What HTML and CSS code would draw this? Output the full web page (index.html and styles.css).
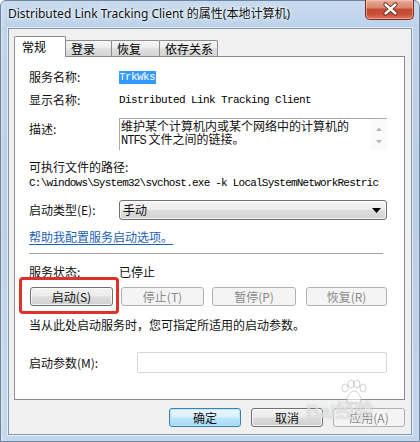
FILE: index.html
```html
<!DOCTYPE html>
<html>
<head>
<meta charset="utf-8">
<link rel="stylesheet" href="styles.css">
</head>
<body>
<div class="window">
  <div class="titlebar">
    <span class="title">Distributed Link Tracking Client 的属性(本地计算机)</span>
    <div class="close">
      <svg width="49" height="19" viewBox="0 0 49 19">
        <path d="M19.5 4.5 L29.5 13.5 M29.5 4.5 L19.5 13.5" stroke="#5a2418" stroke-width="4.2" stroke-linecap="round" fill="none"/>
        <path d="M19.5 4.5 L29.5 13.5 M29.5 4.5 L19.5 13.5" stroke="#ffffff" stroke-width="2.4" stroke-linecap="round" fill="none"/>
      </svg>
    </div>
  </div>
  <div class="client">
    <div class="tabs">
      <div class="tab active">常规</div>
      <div class="tab t2">登录</div>
      <div class="tab t3">恢复</div>
      <div class="tab t4">依存关系</div>
    </div>
    <div class="panel">
      <div class="row r1"><span class="label">服务名称:</span><span class="mono sel">TrkWks</span></div>
      <div class="row r2"><span class="label">显示名称:</span><span class="mono">Distributed Link Tracking Client</span></div>
      <div class="row r3">
        <span class="label desc-label">描述:</span>
        <div class="desc">
          <div class="desc-text"><div>维护某个计算机内或某个网络中的计算机的</div><div><span class="mono-inline">NTFS</span> 文件之间的链接。</div></div>
          <div class="scroll">
            <svg width="16" height="32" viewBox="0 0 16 32">
              <path d="M5 12 L8 8.5 L11 12 Z" fill="#b8b8b8"/>
              <path d="M5 21 L8 24.5 L11 21 Z" fill="#b8b8b8"/>
            </svg>
          </div>
        </div>
      </div>
      <div class="row r4"><span class="text">可执行文件的路径:</span></div>
      <div class="row r5"><span class="mono path">C:\windows\System32\svchost.exe -k LocalSystemNetworkRestric</span></div>
      <div class="row r6">
        <span class="label">启动类型(E):</span>
        <div class="combo">
          <span class="combo-text">手动</span>
          <svg class="combo-arrow" width="9" height="5" viewBox="0 0 9 5"><path d="M0 0 H9 L4.5 5 Z" fill="#000"/></svg>
        </div>
      </div>
      <div class="row r7"><a class="link">帮助我配置服务启动选项。</a></div>
      <div class="sep"></div>
      <div class="row r8"><span class="label">服务状态:</span><span class="text">已停止</span></div>
      <div class="btnrow">
        <div class="btn">启动(S)</div>
        <div class="btn disabled">停止(T)</div>
        <div class="btn disabled">暂停(P)</div>
        <div class="btn disabled">恢复(R)</div>
        <div class="highlight"></div>
      </div>
      <div class="row r10"><span class="text">当从此处启动服务时，您可指定所适用的启动参数。</span></div>
      <div class="row r11">
        <span class="label param-label">启动参数(M):</span>
        <div class="input"></div>
      </div>
    </div>
    <div class="dlg-buttons">
      <div class="btn dlg default">确定</div>
      <div class="btn dlg">取消</div>
      <div class="btn dlg disabled">应用(A)</div>
    </div>
    <div class="watermark">
      <svg class="wm-paw" width="30" height="26" viewBox="0 0 30 26">
        <g fill="rgba(255,255,255,0.6)" stroke="rgba(150,150,150,0.45)" stroke-width="1">
          <ellipse cx="7" cy="9" rx="3" ry="4"/>
          <ellipse cx="13" cy="5" rx="3" ry="4"/>
          <ellipse cx="19" cy="5" rx="3" ry="4"/>
          <ellipse cx="25" cy="9" rx="3" ry="4"/>
          <path d="M9 22 C9 15 14 12 16 12 C18 12 23 15 23 22 C23 25 9 25 9 22 Z"/>
        </g>
      </svg>
      <span class="wm-text">Bai经验</span>
    </div>
  </div>
</div>
</body>
</html>
```

FILE: styles.css
```css
* { box-sizing: border-box; }
html, body { margin: 0; padding: 0; }
body {
  width: 420px;
  height: 442px;
  overflow: hidden;
  font-family: "Noto Sans", "Noto Sans CJK SC", sans-serif;
  font-size: 12px;
  color: #000;
}
.window {
  width: 420px;
  height: 442px;
  background:
    linear-gradient(90deg, rgba(255,255,255,0.35) 0px, rgba(255,255,255,0) 4px, rgba(255,255,255,0) 416px, rgba(255,255,255,0.3) 420px),
    linear-gradient(180deg, #c7dbef 0px, #bcd2ea 28px, #b7cee7 200px, #c3d7ec 442px);
  display: flex;
  flex-direction: column;
  border: 1px solid #6f839b;
  border-radius: 6px 6px 0 0;
}
.titlebar {
  height: 27px;
  display: flex;
  align-items: flex-start;
  padding-left: 7px;
}
.title {
  font-family: "Noto Sans", "Noto Sans CJK SC", sans-serif;
  font-size: 12px;
  line-height: 16px;
  margin-top: 5px;
  color: #111;
  text-shadow: 0 0 6px rgba(255,255,255,0.9), 0 0 3px rgba(255,255,255,0.9);
  white-space: nowrap;
}
.close {
  margin-left: auto;
  margin-right: 5px;
  margin-top: -1px;
  width: 49px;
  height: 20px;
  border: 1px solid #7a2f22;
  border-top: none;
  border-radius: 0 0 5px 5px;
  background: linear-gradient(180deg, #e9aa98 0%, #d98670 40%, #c44a33 50%, #c94f37 75%, #e07a5e 100%);
  box-shadow: inset 0 0 0 1px rgba(255,220,210,0.45);
}
.close svg { display: block; }
.client {
  margin: 0 7px 0 7px;
  height: 407px;
  background: #f0f0f0;
  border: 1px solid #8496ab;
  box-shadow: 0 0 0 1px rgba(255,255,255,0.6);
  padding: 7px 6px 0 5px;
  position: relative;
}
.tabs {
  height: 20px;
  display: flex;
  align-items: flex-end;
  position: relative;
  z-index: 1;
}
.tab {
  height: 16px;
  border: 1px solid #898c95;
  border-bottom: none;
  border-radius: 2px 2px 0 0;
  background: linear-gradient(180deg, #f6f6f6 0%, #ececec 45%, #dedede 55%, #d4d4d4 100%);
  font-family: "Noto Sans CJK SC", sans-serif;
  font-size: 12px;
  line-height: 15px;
  padding: 0 0 0 5px;
  margin-left: -1px;
  white-space: nowrap;
}
.tab.active {
  height: 21px;
  margin-bottom: -1px;
  margin-left: 0;
  width: 52px;
  background: #fff;
  padding: 2px 0 0 7px;
  position: relative;
  z-index: 2;
}
.t2 { width: 47px; }
.t3 { width: 49px; }
.t4 { width: 59px; }
.panel {
  height: 344px;
  background: #fff;
  border: 1px solid #898c95;
  padding: 12px 17px 0 14px;
  display: flex;
  flex-direction: column;
}
.row {
  display: flex;
  align-items: center;
  height: 16px;
  flex: none;
}
.label {
  width: 90px;
  flex: none;
  font-family: "Noto Sans CJK SC", sans-serif;
  font-size: 12px;
  line-height: 16px;
  color: #111;
}
.text {
  font-family: "Noto Sans CJK SC", sans-serif;
  font-size: 12px;
  line-height: 16px;
  color: #111;
  white-space: nowrap;
}
.mono {
  font-family: "Liberation Mono", "Noto Sans CJK SC", monospace;
  font-size: 11px;
  letter-spacing: -0.6px;
  line-height: 13px;
  white-space: nowrap;
}
.sel {
  background: #3399ff;
  color: #fff;
  padding: 0 1px 0 0;
  width: 37px;
  display: inline-block;
}
.r2 { margin-top: 7px; }
.r3 {
  margin-top: 10px;
  height: 32px;
  align-items: flex-start;
}
.desc-label { padding-top: 3px; }
.desc {
  flex: 1;
  height: 32px;
  display: flex;
  border-top: 1px solid #a9a9a9;
  border-left: 1px solid #a9a9a9;
}
.desc-text {
  flex: 1;
  padding: 0 0 0 1px;
  font-family: "Noto Sans CJK SC", sans-serif;
  font-size: 12px;
  line-height: 13px;
  color: #111;
  white-space: nowrap;
  min-width: 0;
}
.mono-inline {
  font-family: "Liberation Mono", monospace;
  font-size: 12px;
  letter-spacing: -1px;
}
.scroll {
  width: 16px;
  flex: none;
  background: #fafafa;
}
.scroll svg { display: block; }
.r4 { margin-top: 9px; }
.path { letter-spacing: -0.78px; }
.r6 { margin-top: 9px; height: 20px; }
.combo {
  flex: 1;
  height: 20px;
  border: 1px solid #707070;
  border-radius: 3px;
  background: linear-gradient(180deg, #f4f4f4 0%, #ececec 48%, #dddddd 52%, #d2d2d2 100%);
  box-shadow: inset 0 0 0 1px rgba(255,255,255,0.7);
  display: flex;
  align-items: center;
  padding: 0 4px 0 3px;
}
.combo-text {
  font-family: "Noto Sans CJK SC", sans-serif;
  font-size: 12px;
  line-height: 16px;
  color: #111;
}
.combo-arrow { margin-left: auto; margin-right: 1px; }
.r7 { margin-top: 9px; }
.link {
  font-family: "Noto Sans CJK SC", sans-serif;
  font-size: 12px;
  line-height: 16px;
  color: #1c62b5;
  text-decoration: underline;
  text-underline-offset: 2px;
}
.sep {
  margin-top: 8px;
  height: 1px;
  background: #a0a0a0;
  margin-right: 4px;
  flex: none;
}
.r8 { margin-top: 10px; }
.btnrow {
  margin-top: 7px;
  margin-left: 1px;
  height: 19px;
  display: grid;
  grid-template-columns: 83px 83px 84px 83px;
  column-gap: 8px;
  position: relative;
  flex: none;
}
.btnrow .btn:nth-child(4) { margin-left: 2px; }
.btn {
  height: 19px;
  border: 1px solid #707070;
  border-radius: 3px;
  background: linear-gradient(180deg, #f2f2f2 0%, #ebebeb 48%, #dddddd 52%, #cfcfcf 100%);
  box-shadow: inset 0 0 0 1px rgba(255,255,255,0.75);
  font-family: "Noto Sans CJK SC", sans-serif;
  font-size: 12px;
  line-height: 17px;
  text-align: center;
  color: #111;
  white-space: nowrap;
}
.btn.disabled {
  border-color: #adb2b5;
  background: #f4f4f4;
  box-shadow: none;
  color: #8a8a8a;
}
.highlight {
  position: absolute;
  left: -11px;
  top: -10px;
  width: 100px;
  height: 37px;
  border: 3px solid #e0302a;
  border-radius: 4px;
}
.r10 { margin-top: 11px; }
.r11 { margin-top: 19px; height: 21px; }
.param-label { width: 108px; }
.input {
  flex: 1;
  height: 21px;
  border: 1px solid #d4d6da;
  border-radius: 2px;
  background: #fff;
}
.dlg-buttons {
  margin-top: 8px;
  display: flex;
  justify-content: flex-end;
  gap: 10px;
}
.btn.dlg { width: 72px; }
.btn.default {
  border-color: #3c7fb1;
  background: linear-gradient(180deg, #eaf6fd 0%, #d9f0fc 48%, #bee6fd 52%, #a7d9f5 100%);
  box-shadow: inset 0 0 0 1px rgba(180,230,255,0.9);
}
.watermark {
  position: absolute;
  left: 297px;
  top: 350px;
  width: 100px;
  height: 48px;
  pointer-events: none;
}
.wm-paw { position: absolute; left: 32px; top: 0; }
.wm-text {
  position: absolute;
  left: 0;
  top: 22px;
  font-family: "Liberation Sans", "Noto Sans CJK SC", sans-serif;
  font-weight: bold;
  font-size: 19px;
  line-height: 22px;
  color: rgba(255,255,255,0.6);
  text-shadow: 0 0 1px rgba(120,120,120,0.5);
  white-space: nowrap;
}
```
